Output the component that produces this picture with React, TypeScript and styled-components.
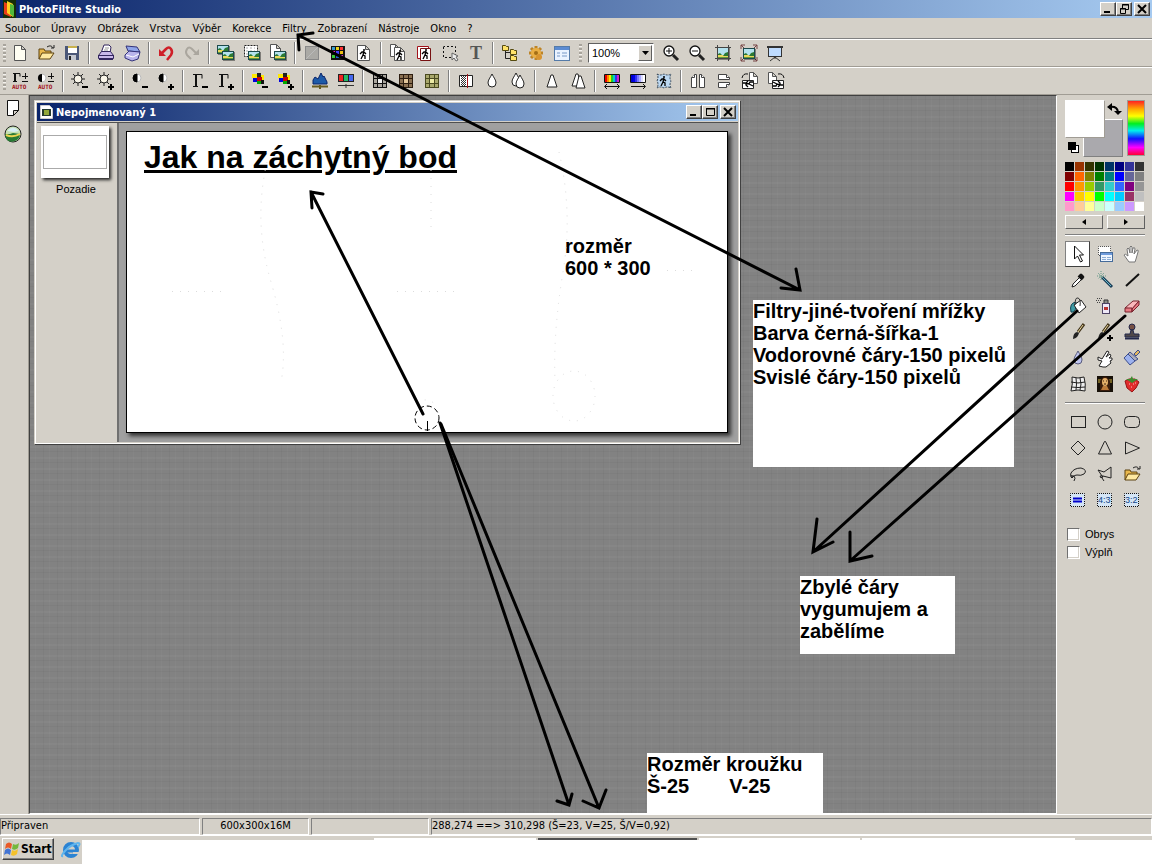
import React from "react";
import styled, { createGlobalStyle } from "styled-components";

const face = "#d4d0c8";
const uiFont = `Tahoma, "DejaVu Sans Condensed", "Noto Sans", sans-serif`;

const Man = ({ x = 0, y = 0, turn = 0 }: { x?: number; y?: number; turn?: number }) => (
  <g transform={`translate(${x} ${y}) rotate(${turn} 4 5)`} fill="none" stroke="#000">
    <circle cx="5" cy="1" r="1" fill="#000" stroke="none" />
    <path d="M5 2L4 6L6 7L6 10M4 6L2 10M1 5L3 3H5L7 5" strokeWidth="1.3" />
  </g>
);

const Page = ({ x, y, w = 11, h = 14, fill = "#fff" }: any) => (
  <path
    d={`M${x} ${y}h${w - 4}l4 4v${h - 4}h-${w}zM${x + w - 4} ${y}v4h4`}
    fill={fill}
    stroke="#555"
  />
);

const Photo = ({ x, y, w = 12, h = 9 }: any) => (
  <g>
    <rect x={x + 1} y={y + 1} width={w} height={h} fill="#0006" />
    <rect x={x} y={y} width={w} height={h} fill="#1c4a4c" />
    <rect x={x + 1} y={y + 1} width={w - 2} height={h - 2} fill="#b4e2ee" />
    <rect x={x + 1} y={y + h - 4} width={w - 2} height="3" fill="#ead75e" />
    <path d={`M${x + 1} ${y + h - 4}v-1l2-1l2 2zM${x + w - 1} ${y + h - 3}v-4l-3 1l-2 3z`} fill="#2b7a34" />
    <path d={`M${x + 1} ${y + h - 1.5}h${w - 2}`} stroke="#5f9a3a" />
  </g>
);

const Folder = () => (
  <g>
    <path d="M3 16V6h5l1 2h6v3" fill="#e9b84c" stroke="#5d4210" />
    <path d="M3 16l3-6h12l-4 6z" fill="#ffe9a0" stroke="#5d4210" />
    <path d="M11 4c3-2 5-1 6 1M15 5h3V2" fill="none" stroke="#222" />
  </g>
);

const Contrast = () => (
  <g>
    <circle cx="7" cy="7" r="4" fill="#fff" stroke="#bbb" />
    <path d="M7 3a4 4 0 0 0 0 8z" fill="#000" stroke="#000" />
  </g>
);

const Sun = () => (
  <g stroke="#222">
    <path d="M8 1v14M1 8h14M3 3l10 10M13 3L3 13" />
    <circle cx="8" cy="8" r="4" fill="#f8f4e8" />
  </g>
);

const Cubes = () => (
  <g>
    <path d="M2 3h5v4H2z" fill="#ffe800" />
    <path d="M7 2h4v4H7z" fill="#222" />
    <path d="M3 7h4v4H3z" fill="#00d" />
    <path d="M7 6h5v4H7z" fill="#c00" />
    <path d="M11 4h3v5h-2V6h-1z" fill="#ffe800" />
    <path d="M7 10h4v3H7z" fill="#0a0" />
    <path d="M11 9h3v4h-3z" fill="#111" />
  </g>
);

const Gamma = () => (
  <path d="M3 3.500h9v4M3 15.500h5M5.500 4v11M6.500 4v11" fill="none" stroke="#111" />
);

const Minus = () => <path d="M12 16h6" stroke="#000" strokeWidth="2" />;
const Plus = () => <path d="M12 16h6M15 13v6" stroke="#000" strokeWidth="2" />;

const Grid = ({ line, fill, dark }: any) => (
  <g>
    <rect x="3" y="3" width="14" height="14" fill={dark} />
    {[4, 8, 13].map((y) =>
      [4, 8, 13].map((x) => (
        <rect
          key={`${x}-${y}`}
          x={x}
          y={y}
          width={x === 8 ? 4 : 3}
          height={y === 8 ? 4 : 3}
          fill={x === 8 && y === 8 ? fill : line}
        />
      ))
    )}
  </g>
);

const Auto = () => (
  <text x="2" y="18" fontSize="6" fontWeight="700" fill="#a3131b" fontFamily="DejaVu Sans Mono, monospace">
    AUTO
  </text>
);

const Marquee = ({ children }: any) => (
  <g>
    <path
      d="M2.500 3.500h14v13h-14z"
      fill="#d4e5f6"
      stroke="#111"
      strokeDasharray="1 1"
      strokeDashoffset=".5"
    />
    {children}
  </g>
);

const Ratio = ({ value }: { value: string }) => (
  <text x="3" y="13" fontSize="9" fill="#148" fontFamily="Liberation Sans, sans-serif">
    {value}
  </text>
);

const drop = "M10 3C8 7 6 9 6 12a4 4 0 0 0 8 0C14 9 12 7 10 3z";

const icons: Record<string, React.ReactNode> = {
  new: <Page x={4.5} y={2.5} w={11} h={15} fill="#fffef2" />,
  open: <Folder />,
  save: (
    <g>
      <path d="M3 3h14v14H4l-1-1z" fill="#4b5878" />
      <rect x="6" y="3" width="9" height="7" fill="#fff" />
      <rect x="6" y="3" width="9" height="2" fill="#c9b24f" />
      <rect x="6" y="12" width="8" height="5" fill="#c4c8d0" />
      <rect x="7" y="13" width="2" height="4" fill="#222" />
    </g>
  ),
  print: (
    <g stroke="#33265e">
      <path d="M5 10l3-8h5l2 2-1 6z" fill="#fff" />
      <path d="M2.500 12.500l3-4h9l3 4v3h-15z" fill="#c9b8ea" />
      <path d="M2 12.500h16M3 16.500h14" />
      <path d="M9 5h4M8 7h4" stroke="#999" />
    </g>
  ),
  scan: (
    <g stroke="#33337a">
      <path d="M4 3l11 1l3 5l-12-1z" fill="#8ea4e8" />
      <path d="M3 12l4-4l11 1l-2 7l-6 2l-7-3z" fill="#b9b4ec" />
      <path d="M4 12l7 2l6-3" fill="none" stroke="#fff" />
    </g>
  ),
  undo: (
    <g>
      <path d="M6 10l4-4q3-3 5 0t0 6l-4 5" fill="none" stroke="#cf1f28" strokeWidth="2.500" />
      <path d="M3 6v7h7z" fill="#cf1f28" />
    </g>
  ),
  redo: (
    <g>
      <path d="M14 10l-4-4q-3-3-5 0t0 6l4 4" fill="none" stroke="#aaa69e" strokeWidth="2" />
      <path d="M17 6v6h-6z" fill="#aaa69e" />
    </g>
  ),
  copyImg: (<g><Photo x={1} y={2} /><Photo x={6} y={8} /></g>),
  pasteImg: (
    <g>
      <path d="M2.500 2.500h13v11h-13z" fill="#fff" stroke="#222" strokeDasharray="2 1" />
      <path d="M4 5h9M4 8h9M4 11h9" stroke="#aaa" strokeDasharray="2 2" />
      <Photo x={6} y={8} />
    </g>
  ),
  pageImg: (<g><Page x={2.5} y={1.5} w={10} h={13} /><Photo x={6} y={8} /></g>),
  gray: (<g><rect x="3.500" y="3.500" width="13" height="13" fill="#aaa9a5" stroke="#888" /><path d="M4 16L16 4" stroke="#bbb" /></g>),
  colors: (
    <g>
      <rect x="3" y="3" width="14" height="14" fill="#111" />
      {["#39c", "#e9d21c", "#f33", "#e2c", "#44f", "#eb1", "#3c3", "#26c", "#d3d"].map((c, i) => (
        <rect key={i} x={4 + (i % 3) * 4} y={4 + Math.floor(i / 3) * 4} width="3" height="3" fill={c} />
      ))}
    </g>
  ),
  pageMan: (<g><Page x={3.5} y={2.5} w={12} h={15} /><Man x={5} y={6} /></g>),
  pagesMan: (<g><Page x={2.5} y={1.5} w={9} h={12} /><Page x={6.5} y={4.5} w={10} h={13} /><Man x={7} y={7} /></g>),
  album: (<g><path d="M3.500 3.500h11v12h-11z" fill="#fff" stroke="#a3131b" /><path d="M6.500 5.500h10v12h-10z" fill="#fff" stroke="#711" /><Man x={7} y={6} /></g>),
  select: (
    <g>
      <path d="M3.500 3.500h12v11h-12z" fill="none" stroke="#111" strokeDasharray="2 2" strokeDashoffset=".5" />
      <path d="M12 10l6 3-2 1 2 3-2 1-2-3-2 2z" fill="#eee" stroke="#666" />
    </g>
  ),
  text: <text x="4" y="16" fontSize="18" fontWeight="700" fill="#555" fontFamily="Liberation Serif, serif">T</text>,
  tree: (
    <g>
      <path d="M5.500 6v9.500H12M5 9.500h7" fill="none" stroke="#222" />
      {[[2.5, 2.5], [10.5, 6.5], [10.5, 12.5]].map(([x, y]) => (
        <path key={y} d={`M${x} ${y}h3l1 1h2v4h-6z`} fill="#ffe36a" stroke="#554a10" />
      ))}
    </g>
  ),
  gear: (
    <g>
      <path d="M10 3v14M3 10h14M5 5l10 10M15 5L5 15" stroke="#bd8427" strokeWidth="3" />
      <circle cx="10" cy="10" r="5" fill="#e9ae43" />
      <circle cx="10" cy="10" r="2" fill="#a36e16" />
      <circle cx="13" cy="14" r="3" fill="#d89430" />
    </g>
  ),
  dialog: (
    <g>
      <rect x="2.500" y="3.500" width="15" height="14" fill="#eaf3ff" stroke="#557ba8" />
      <rect x="3" y="4" width="14" height="3" fill="#5b8bd2" />
      <path d="M5 10h3M10 10h5M5 13h3M10 13h5" stroke="#7698c6" />
    </g>
  ),
  zoomIn: (<g><circle cx="8" cy="8" r="5" fill="#fff" stroke="#111" strokeWidth="1.300" /><path d="M8 5v6M5 8h6" stroke="#111" /><path d="M12 12l5 5" stroke="#222" strokeWidth="3" /></g>),
  zoomOut: (<g><circle cx="8" cy="8" r="5" fill="#fff" stroke="#111" strokeWidth="1.300" /><path d="M5 8h6" stroke="#111" /><path d="M12 12l5 5" stroke="#222" strokeWidth="3" /></g>),
  fit: (<g><Photo x={4} y={4} w={12} h={12} /><path d="M2 4.500h16M2 15.500h16M4.500 2v16M15.500 2v16" stroke="#444" /></g>),
  fitAll: (<g><path d="M2 6V2h4M14 2h4v4M18 14v4h-4M6 18H2v-4M2 2l16 16M18 2L2 18" fill="none" stroke="#744" /><Photo x={4} y={5} w={12} h={11} /></g>),
  screen: (<g stroke="#333"><path d="M10 14L5 18M10 14l5 4M10 13v3" /><rect x="3.500" y="4.500" width="13" height="9" fill="#bfdcff" /><path d="M2 4h16" strokeWidth="2" /></g>),

  gammaAuto: (<g><path d="M3 2.500h7v3M3 10.500h4M4.500 3v8M5.500 3v8M12 5.500h6M15.500 2v6M12 10.500h6" fill="none" stroke="#111" /><Auto /></g>),
  contrastAuto: (<g><circle cx="6" cy="7" r="4" fill="#fff" stroke="#bbb" /><path d="M6 3a4 4 0 0 0 0 8z" /><path d="M12 5.500h6M15.500 2v6M12 10.500h6" stroke="#111" /><Auto /></g>),
  sunDown: (<g><Sun /><Minus /></g>),
  sunUp: (<g><Sun /><Plus /></g>),
  contrastDown: (<g><Contrast /><Minus /></g>),
  contrastUp: (<g><Contrast /><Plus /></g>),
  gammaDown: (<g><Gamma /><Minus /></g>),
  gammaUp: (<g><Gamma /><Plus /></g>),
  satDown: (<g><Cubes /><Minus /></g>),
  satUp: (<g><Cubes /><Plus /></g>),
  histogram: (<g><path d="M3 13V9l2-3 3 2 3-6 2 4 1-1 3 6v2z" fill="#1d5aa8" stroke="#0a246a" /><path d="M2 15.500h16M10 14v4" stroke="#665a20" strokeWidth="2" /></g>),
  levels: (
    <g>
      <rect x="2" y="3" width="16" height="8" fill="#222" />
      <path d="M3 4h4v6H3z" fill="#e22" /><path d="M8 4h4v6H8z" fill="#2b6" /><path d="M13 4h4v6h-4z" fill="#46e" />
      <path d="M2 14.500h16M10 13v4" stroke="#333" />
    </g>
  ),
  gridGray: <Grid dark="#111" line="#aaa69e" fill="#eee" />,
  gridBrown: <Grid dark="#2c1d10" line="#8a7052" fill="#e2c69b" />,
  gridOlive: <Grid dark="#4a4a20" line="#a9a86c" fill="#eceaa5" />,
  halftone: (
    <g>
      <path d="M3.500 4.500h13v11h-13z" fill="#fff" stroke="#222" />
      <path d="M5.500 5v10M7.500 5v10M9.500 5v10" stroke="#333" strokeDasharray="1 1" />
      <path d="M6.500 6v9M8.500 6v9" stroke="#333" strokeDasharray="1 1" />
      <path d="M11.500 3v14" stroke="#a3131b" />
    </g>
  ),
  drop: <path d={drop} fill="#fff" stroke="#222" />,
  drops: (<g fill="#fff" stroke="#222"><path d="M8 2C6 6 4 8 4 11a4 4 0 0 0 8 0C12 8 10 6 8 2z" /><path d="M12 4c-2 4-4 6-4 9a4 4 0 0 0 8 0c0-3-2-5-4-9z" /></g>),
  cone: <path d="M9 4h2l4 12H5z" fill="#fff" stroke="#222" />,
  cones: (<g fill="#fff" stroke="#222"><path d="M8 3h2l3 12H4z" /><path d="M11 5h2l4 12H8z" /></g>),
  hue: (
    <g>
      {["#e00", "#f80", "#fe0", "#2c2", "#0cc", "#33e", "#c2c"].map((c, i) => (
        <rect key={c} x={3 + i * 2} y="4" width="2" height="8" fill={c} />
      ))}
      <path d="M2.500 3.500h15v8h-15zM3 15.500h14M5 13l-2.500 2.500l2.500 2.500M15 13l2.500 2.500l-2.500 2.500" fill="none" stroke="#111" />
    </g>
  ),
  gradient: (
    <g>
      {["#00c", "#00e", "#33e", "#77f", "#aaf", "#ddf", "#fff"].map((c, i) => (
        <rect key={c} x={3 + i * 2} y="4" width="2" height="8" fill={c} />
      ))}
      <path d="M2.500 3.500h15v8h-15zM3 15.500h14M15 13l2.500 2.500l-2.500 2.500" fill="none" stroke="#111" />
    </g>
  ),
  warp: (<g><path d="M3 3q3 2 7 0q4 2 7 0q-2 4 0 7q-2 4 0 7q-4-2-7 0q-4-2-7 0q2-4 0-7q2-4 0-7z" fill="#bcd8f2" stroke="#345" strokeDasharray="2 1" /><Man x={5} y={5} /></g>),
  flipH: (<g fill="#fff" stroke="#444"><path d="M3.500 16.500V6.500l3-3h2v13zM11.500 3.500h2l3 3v10h-5z" /><path d="M6.500 3.500v3h-3M13.500 3.500v3h3" /></g>),
  flipV: (<g fill="#fff" stroke="#444"><path d="M4.500 3.500h8l3 3v2h-11zM4.500 11.500h11v2l-3 3h-8z" /><path d="M12.500 3.500v3h3M12.500 16.500v-3h3" /></g>),
  rotL: (<g><Page x={9.5} y={1.5} w={8} h={11} /><path d="M2.500 9.500h11v8h-11z" fill="#fff" stroke="#222" /><Man x={4} y={8} turn={-90} /><path d="M2 7q1-5 6-4" fill="none" stroke="#111" /></g>),
  rotR: (<g><Page x={2.5} y={1.5} w={8} h={11} /><path d="M6.500 9.500h11v8h-11z" fill="#fff" stroke="#222" /><Man x={8} y={8} turn={90} /><path d="M12 3q5-1 6 4" fill="none" stroke="#111" /></g>),

  arrow: <path d="M6.500 2v13l3-3 3 6 2-1-3-6h4z" fill="#fff" stroke="#111" />,
  layers: (
    <g>
      <rect x="3.500" y="2.500" width="12" height="9" fill="#fff" stroke="#555" strokeDasharray="1 1" strokeDashoffset=".5" />
      <rect x="5.500" y="8.500" width="12" height="9" fill="#eef5ff" stroke="#456b9a" />
      <rect x="6" y="9" width="11" height="2" fill="#6e9bdc" />
      <path d="M7 13.500h4M12 13.500h4M7 15.500h4M12 15.500h4" stroke="#8cadd6" />
    </g>
  ),
  hand: <path d="M7 18L2 11q1-2 4 1L5 5q1-2 2 0l1 4V3q1-2 2 0v6l1-5q2-1 2 1l-1 5 3-4q2 0 1 2l-2 7-1 3z" fill="#fff" stroke="#777" />,
  picker: (<g><path d="M4 17l1-3 7-7 2 2-7 7z" fill="#fff" stroke="#222" /><path d="M11 5l4 4M12 8l3-3" stroke="#111" strokeWidth="4" /></g>),
  wand: (<g><path d="M7 7l10 10" stroke="#193e58" strokeWidth="3" /><path d="M7 7l9 9" stroke="#69b8c8" /><path d="M6 1v9M2 6h9M3 3l6 6M9 3L3 9" stroke="#698" strokeDasharray="1 1" /></g>),
  line: <path d="M4 16L17 4" stroke="#111" strokeWidth="2" />,
  bucket: (
    <g>
      <path d="M8 6Q1 7 3 16q4 1 5-5z" fill="#3e9ba4" stroke="#145" />
      <path d="M6 9l7-5 5 7-7 6z" fill="#fff" stroke="#222" />
      <path d="M7 9q0-8 3-7t2 8" fill="none" stroke="#333" />
    </g>
  ),
  spray: (<g><rect x="7.500" y="7.500" width="7" height="10" fill="#eee8f8" stroke="#4d4265" /><path d="M9 7V4h4v3" fill="#888" stroke="#333" /><path d="M9 11h4v3H9z" fill="#b33" /><path d="M2 2.500h5M1 4.500h5M2 6.500h4" stroke="#444" strokeDasharray="1 1" /></g>),
  eraser: (<g stroke="#77232d"><path d="M3 12l8-7h6l-7 8z" fill="#f9b8bb" /><path d="M3 12h7v4H3zM10 16l7-7V5l-7 8z" fill="#e87a83" /></g>),
  brush: (<g><path d="M16 2l-6 8" stroke="#43351b" strokeWidth="3" /><path d="M15 3l-5 7" stroke="#ead9a0" /><path d="M9 10q-4 1-4 7q5-1 6-6z" fill="#222" /></g>),
  brushPlus: (<g><path d="M14 2L8 10" stroke="#43351b" strokeWidth="3" /><path d="M13 3l-5 7" stroke="#ead9a0" /><path d="M7 10q-3 1-4 7q5-1 6-6z" fill="#222" /><Plus /></g>),
  stamp: (<g stroke="#23284a"><circle cx="10" cy="5" r="3" fill="#765044" /><path d="M9 8h2l1 4h5v3H3v-3h5z" fill="#504848" /><path d="M3 16.500h14" strokeWidth="2" /></g>),
  water: (<g><path d={drop} fill="#bfc5f0" stroke="#56597c" /><path d="M8 11v3" stroke="#fff" strokeWidth="2" /></g>),
  smudge: <path d="M4 18l3-5-4-1V9l4 2 5-8 2 1-3 5 4-3 1 2-2 2h3v2l-2 1 1 2-5 4H8z" fill="#fff" stroke="#222" />,
  roller: (<g stroke="#3d4e8c"><path d="M12 6l4-4 2 2-4 4z" fill="#e3b65d" /><path d="M8 4l8 7-3 2-7-7z" fill="#aab" /><path d="M6 6l7 7-5 4-6-7z" fill="#9db2ee" /></g>),
  mesh: <path d="M4 3q6 2 12 0q2 7 1 14q-7-2-14 0q2-7 1-14M3 8q7 2 14 0M3 13q7 1 14 0M8 4q1 6 0 12M12 4q2 6 0 12" fill="#eee" stroke="#222" />,
  face: (<g><rect x="2" y="2" width="16" height="16" fill="#171008" /><path d="M3 5h3v4H3zM14 5h3v4h-3z" fill="#746225" /><path d="M5 17V7q5-9 10 0v10z" fill="#3b1c0b" /><ellipse cx="10" cy="8" rx="3" ry="4" fill="#e6b06b" /><path d="M8 12h4l2 4H6z" fill="#bd793a" /><path d="M8 7h1M11 7h1M9 10h2" stroke="#421" /></g>),
  berry: (<g><path d="M3 7l4-2 6 0 4 3-3 6-4 4-5-4z" fill="#e02c2c" stroke="#971414" /><path d="M4 5l4 0 2-3 1 3 5 0-3 2-3 2-3-2z" fill="#3d8a2d" /><path d="M7 10h1M11 10h1M9 13h1M13 9h1" stroke="#fbb" /></g>),
  rect: <rect x="3.500" y="4.500" width="14" height="11" fill="none" stroke="#222" />,
  ellipse: <circle cx="10" cy="10" r="7" fill="none" stroke="#222" />,
  round: <rect x="2.500" y="4.500" width="15" height="11" rx="4" fill="none" stroke="#222" />,
  diamond: <path d="M10 3l7 7-7 7-7-7z" fill="none" stroke="#222" />,
  tri: <path d="M9.500 3.500h1l6 12.500h-13z" fill="none" stroke="#222" />,
  triRight: <path d="M3.500 4v12l14-6z" fill="none" stroke="#222" />,
  lasso: <path d="M5 13Q1 12 3 9q3-5 10-5 7 2 3 6-3 2-7 1-3 0-4 2t-2 0 3-1q2 2 0 5" fill="none" stroke="#222" />,
  poly: <path d="M7 12L3 6l6 2 7-5v11l-4-1-4-1-2 2-1-2h3l-1 2 2 3" fill="none" stroke="#222" />,
  equal: <Marquee><path d="M5 8.500h9M5 11.500h9" stroke="#00c" strokeWidth="2" /></Marquee>,
  r43: <Marquee><Ratio value="4:3" /></Marquee>,
  r32: <Marquee><Ratio value="3:2" /></Marquee>,
  sheet: <path d="M4.500 2.500h11v10l-5 5h-6zM15.500 12.500h-5v5" fill="#fff" stroke="#111" />,
  globe: (
    <g>
      <circle cx="10" cy="10" r="8" fill="#c4dfb0" stroke="#222" />
      <path d="M4 7q6-7 12 0l-5 1z" fill="#d6eef5" />
      <path d="M2 10h5l3-1 7 1q0 6-7 7.500T2 10z" fill="#287a35" />
      <path d="M3 11q7 3 14-1" stroke="#ebd452" strokeWidth="2" fill="none" />
    </g>
  ),
};

const mainTools = [
  ["new", "open", "save"],
  ["print", "scan"],
  ["undo", "redo"],
  ["copyImg", "pasteImg", "pageImg"],
  ["gray", "colors", "pageMan"],
  ["pagesMan", "album", "select", "text"],
  ["tree", "gear", "dialog"],
];
const zoomTools = ["zoomIn", "zoomOut", "fit", "fitAll", "screen"];
const filterTools = [
  ["gammaAuto", "contrastAuto"],
  ["sunDown", "sunUp"],
  ["contrastDown", "contrastUp"],
  ["gammaDown", "gammaUp"],
  ["satDown", "satUp"],
  ["histogram", "levels"],
  ["gridGray", "gridBrown", "gridOlive"],
  ["halftone", "drop", "drops"],
  ["cone", "cones"],
  ["hue", "gradient", "warp"],
  ["flipH", "flipV", "rotL", "rotR"],
];
const paintTools = [
  "arrow", "layers", "hand", "picker", "wand", "line", "bucket", "spray", "eraser",
  "brush", "brushPlus", "stamp", "water", "smudge", "roller", "mesh", "face", "berry",
];
const shapeTools = [
  "rect", "ellipse", "round", "diamond", "tri", "triRight",
  "lasso", "poly", "open", "equal", "r43", "r32",
];
const palette = [
  "#000000", "#993300", "#333300", "#003300", "#003366", "#000080", "#333399", "#333333",
  "#800000", "#ff6600", "#808000", "#008000", "#008080", "#0000ff", "#666699", "#808080",
  "#ff0000", "#ff9900", "#99cc00", "#339966", "#33cccc", "#3366ff", "#800080", "#969696",
  "#ff00ff", "#ffcc00", "#ffff00", "#00ff00", "#00ffff", "#00ccff", "#993366", "#c0c0c0",
  "#ff99cc", "#ffcc99", "#ffff99", "#ccffcc", "#ccffff", "#99ccff", "#cc99ff", "#ffffff",
];
const menu = [
  "Soubor", "Úpravy", "Obrázek", "Vrstva", "Výběr", "Korekce",
  "Filtry", "Zobrazení", "Nástroje", "Okno", "?",
];

const Icon = ({ name }: { name: string }) => (
  <Glyph viewBox="0 0 20 20" aria-hidden="true">
    {icons[name]}
  </Glyph>
);

const ToolGroups = ({ groups }: { groups: string[][] }) => (
  <>
    {groups.map((group, i) => (
      <React.Fragment key={i}>
        {i > 0 && <Divider />}
        {group.map((name) => (
          <ToolButton key={name} aria-label={name}>
            <Icon name={name} />
          </ToolButton>
        ))}
      </React.Fragment>
    ))}
  </>
);

const WindowButtons = ({ restore }: { restore?: boolean }) => (
  <Captions>
    <CaptionButton aria-label="minimize">
      <svg width="12" height="10"><path d="M2 8h6" stroke="#000" strokeWidth="2" /></svg>
    </CaptionButton>
    <CaptionButton aria-label="maximize">
      <svg width="12" height="10" fill="none" stroke="#000">
        {restore ? (
          <path d="M4.500 4V.500h6v5H8M4 1h7M2.500 4.500h5v5h-5zM2 5h6" />
        ) : (
          <path d="M2.500 1.500h8v7h-8zM2 1.500h9M2 2h9" />
        )}
      </svg>
    </CaptionButton>
    <CaptionButton aria-label="close" $apart>
      <svg width="12" height="10"><path d="M2 1l8 8M10 1L2 9" stroke="#000" strokeWidth="2" /></svg>
    </CaptionButton>
  </Captions>
);

const App: React.FC = () => {
  return (
    <Shell>
      <GlobalStyle />
      <TitleBar>
        <svg width="16" height="18">
          <rect x="3" width="13" height="18" fill="#162e08" />
          <path d="M4 2l7 3v12l-7-3z" fill="#e93d19" />
          <path d="M7 1l6 3v13l-6-4z" fill="#ffcf22" />
          <path d="M10 4l4 1v12l-4-3z" fill="#52b83a" />
        </svg>
        <TitleText>PhotoFiltre Studio</TitleText>
        <WindowButtons restore />
      </TitleBar>
      <MenuBar>
        {menu.map((item) => (
          <MenuItem key={item}>{item}</MenuItem>
        ))}
      </MenuBar>
      <Toolbar>
        <Grip />
        <ToolGroups groups={mainTools} />
        <Grip $inner />
        <ZoomBox>
          <select aria-label="Zoom" defaultValue="100%">
            <option>100%</option>
            <option>200%</option>
          </select>
          <DropArrow>
            <svg width="7" height="4"><path d="M0 0h7L3.500 4z" /></svg>
          </DropArrow>
        </ZoomBox>
        {zoomTools.map((name) => (
          <ToolButton key={name} aria-label={name}>
            <Icon name={name} />
          </ToolButton>
        ))}
      </Toolbar>
      <Toolbar>
        <Grip />
        <ToolGroups groups={filterTools} />
      </Toolbar>

      <Main>
        <LeftStrip>
          <ToolButton aria-label="page"><Icon name="sheet" /></ToolButton>
          <ToolButton aria-label="explorer"><Icon name="globe" /></ToolButton>
        </LeftStrip>
        <Workspace>
          <ImageWindow>
            <ImageTitle>
              <svg width="13" height="14">
                <path d="M.500.500h9l3 3v10H.500z" fill="#fff" stroke="#ccc" />
                <rect x="2" y="4" width="9" height="7" fill="#263b2d" />
                <rect x="4" y="5" width="5" height="5" fill="#93a83a" />
              </svg>
              <TitleText>Nepojmenovaný 1</TitleText>
              <WindowButtons />
            </ImageTitle>
            <ImageBody>
              <LayerPanel>
                <Thumb>
                  <ThumbFrame />
                </Thumb>
                <LayerName>Pozadie</LayerName>
              </LayerPanel>
              <CanvasArea>
                <Canvas>
                  <Heading>Jak na záchytný bod</Heading>
                  <SizeNote>
                    rozměr
                    <br />
                    600 * 300
                  </SizeNote>
                  <CanvasMarks viewBox="0 0 600 300" fill="none" stroke="#000">
                    <circle cx="300" cy="286" r="12" strokeDasharray="5 3" />
                    <path d="M300.500 289v10" />
                    <g stroke="#dcdcdc" strokeDasharray="1 7">
                      <path d="M45 159.500h50M270 159.500h60M140 30q-14 60 4 120t10 100M304 30v70M432 20q14 60 4 120t-8 110M540 138.500h30" />
                      <ellipse cx="447" cy="264" rx="21" ry="25" />
                      <path d="M290 270q10-5 18 2" />
                    </g>
                  </CanvasMarks>
                </Canvas>
              </CanvasArea>
            </ImageBody>
          </ImageWindow>
          <GridNote>
            Filtry-jiné-tvoření mřížky
            <br />
            Barva černá-šířka-1
            <br />
            Vodorovné čáry-150 pixelů
            <br />
            Svislé čáry-150 pixelů
          </GridNote>
          <EraseNote>
            Zbylé čáry
            <br />
            vygumujem a<br />
            zabělíme
          </EraseNote>
          <CircleNote>
            Rozměr kroužku
            <CirclePair>
              <span>Š-25</span>
              <span>V-25</span>
            </CirclePair>
          </CircleNote>
        </Workspace>
        <SidePanel>
          <ColorRow>
            <Swatches>
              <Background />
              <Foreground />
              <SwatchIcons viewBox="0 0 58 56">
                <path d="M45 7q7-1 8 5" fill="none" stroke="#000" strokeWidth="2" />
                <path d="M42 7l5-4v8zM49 11h8l-4 4z" />
                <rect x="6.500" y="45.500" width="7" height="7" fill="#fff" stroke="#000" />
                <rect x="3" y="42" width="8" height="8" />
              </SwatchIcons>
            </Swatches>
            <Hue />
          </ColorRow>
          <Palette>
            {palette.map((color) => (
              <Cell key={color} $color={color} aria-label={color} />
            ))}
          </Palette>
          <Pager>
            <PagerButton aria-label="previous">
              <svg width="4" height="6"><path d="M4 0v6L0 3z" /></svg>
            </PagerButton>
            <PagerButton aria-label="next">
              <svg width="4" height="6"><path d="M0 0v6l4-3z" /></svg>
            </PagerButton>
          </Pager>
          <Rule />
          <ToolGrid>
            {paintTools.map((name, i) => (
              <PaintButton key={name} $active={i === 0} aria-label={name}>
                <Icon name={name} />
              </PaintButton>
            ))}
          </ToolGrid>
          <Rule />
          <ToolGrid>
            {shapeTools.map((name) => (
              <PaintButton key={name} aria-label={name}>
                <Icon name={name} />
              </PaintButton>
            ))}
          </ToolGrid>
          <Options>
            <Check>
              <input type="checkbox" />
              Obrys
            </Check>
            <Check>
              <input type="checkbox" />
              Výplň
            </Check>
          </Options>
        </SidePanel>
      </Main>

      <StatusBar>
        <StatusCell $width={200}>Připraven</StatusCell>
        <StatusCell $width={107} $center>600x300x16M</StatusCell>
        <StatusCell $width={118} />
        <StatusCell>288,274 ==&gt; 310,298 (Š=23, V=25, Š/V=0,92)</StatusCell>
      </StatusBar>
      <Taskbar>
        <StartButton>
          <svg width="18" height="16">
            <path d="M3 3q3-3 6 0L8 8Q5 5 2 8z" fill="#e95a28" />
            <path d="M10 3q3 2 6-1l-1 5q-3 3-6 1z" fill="#74b83c" />
            <path d="M2 9q3-3 6 0l-1 5q-3-3-6 0z" fill="#4374d3" />
            <path d="M9 9q3 2 6-1l-1 5q-3 3-6 1z" fill="#f4c22c" />
          </svg>
          Start
        </StartButton>
        <Explorer aria-label="Internet Explorer">
          <svg width="20" height="20" fill="none">
            <circle cx="10" cy="10" r="6" stroke="#2b83d3" strokeWidth="4" />
            <path d="M6 11h10" stroke="#2b83d3" strokeWidth="3" />
            <path d="M12 13h7" stroke={face} strokeWidth="2" />
            <path d="M2 16Q-1 17 4 11T17 3q3 0 0 4" stroke="#60b5ee" strokeWidth="2" />
          </svg>
        </Explorer>
        <TaskArea>
          <TaskEdge>
            <TaskTop $width={290} />
            <TaskTop $width={162} $lit />
            <TaskTop $width={159} $pressed />
            <TaskTop $width={161} $lit />
            <TaskTop $width={213} $lit />
          </TaskEdge>
        </TaskArea>
      </Taskbar>

      <Arrows viewBox="0 0 1152 864" aria-hidden="true">
        <path d="M298 35L800 290M313 33L298 35L299 50M781 288L800 290L796 269" />
        <path d="M423 414L311 192M323 194L311 192L312 208" />
        <path d="M1077 311L813 552M817 519L813 552L833 542" />
        <path d="M1125 316L850 561M850 532L850 561L872 556" />
        <path d="M440 423L569 805M557 801L569 805L572 794" />
        <path d="M441 424L599 808M583 801L599 808L606 790" />
      </Arrows>
    </Shell>
  );
};

const GlobalStyle = createGlobalStyle`
  * {
    box-sizing: border-box;
  }
  body {
    margin: 0;
    background: ${face};
    color: #000;
    font-family: ${uiFont};
    font-size: 11px;
  }
  button {
    border: 0;
    padding: 0;
    background: transparent;
    color: inherit;
    font: inherit;
  }
  svg {
    flex: none;
  }
`;

const Shell = styled.div`
  position: relative;
  display: flex;
  flex-direction: column;
  min-height: 100vh;
  overflow: hidden;
`;

const TitleBar = styled.header`
  display: flex;
  align-items: center;
  height: 18px;
  padding-right: 2px;
  color: #fff;
  background: linear-gradient(90deg, #0a246a, #a6caf0);
`;

const TitleText = styled.span`
  flex: 1;
  padding-left: 3px;
  font-weight: 700;
  white-space: nowrap;
`;

const Captions = styled.div`
  display: flex;
`;

const CaptionButton = styled.button<{ $apart?: boolean }>`
  display: flex;
  align-items: center;
  justify-content: center;
  width: 16px;
  height: 14px;
  margin-left: ${(p) => (p.$apart ? "2px" : "0")};
  background: ${face};
  border: 1px solid;
  border-color: #fff #404040 #404040 #fff;
  box-shadow: inset -1px -1px #808080;
`;

const MenuBar = styled.nav`
  display: flex;
  height: 21px;
  padding-left: 5px;
  gap: 11px;
  border-bottom: 1px solid #808080;
`;

const MenuItem = styled.button`
  white-space: nowrap;
`;

const Toolbar = styled.div`
  display: flex;
  align-items: center;
  height: 28px;
  padding-bottom: 1px;
  border-top: 1px solid #fff;
  border-bottom: 1px solid #a09c94;
`;

const Grip = styled.div<{ $inner?: boolean }>`
  width: 3px;
  height: 18px;
  margin: ${(p) => (p.$inner ? "0 6px 0 4px" : "0 1px 0 3px")};
  background: repeating-linear-gradient(#a8a49c 0 2px, #f4f2ee 2px 3px, ${face} 3px 4px);
`;

const Divider = styled.div`
  width: 2px;
  height: 22px;
  margin: 0 3px;
  border-left: 1px solid #808080;
  border-right: 1px solid #fff;
`;

const ToolButton = styled.button`
  display: flex;
  align-items: center;
  justify-content: center;
  width: 26px;
  height: 26px;
`;

const Glyph = styled.svg`
  display: block;
  width: 20px;
  height: 20px;
`;

const ZoomBox = styled.div`
  display: flex;
  width: 66px;
  height: 20px;
  margin-right: 4px;
  padding: 1px;
  background: #fff;
  border: 1px solid;
  border-color: #606060 #fff #fff #606060;

  select {
    flex: 1;
    min-width: 0;
    padding: 0 2px;
    appearance: none;
    border: 0;
    background: #fff;
    font: 11px "Liberation Sans", sans-serif;
  }
`;

const DropArrow = styled.span`
  display: flex;
  align-items: center;
  justify-content: center;
  width: 14px;
  background: ${face};
  border: 1px solid;
  border-color: #fff #606060 #606060 #fff;
`;

const Main = styled.main`
  display: flex;
  flex: 1;
`;

const LeftStrip = styled.aside`
  width: 29px;
  border-right: 1px solid #a09c94;
`;

const Workspace = styled.section`
  position: relative;
  flex: 1;
  padding: 4px;
  background:
    repeating-linear-gradient(90deg, #0000 0 5px, #ffffff06 5px 6px, #0000 6px 13px, #00000008 13px 14px),
    repeating-linear-gradient(#0000 0 3px, #00000008 3px 4px, #0000 4px 9px, #ffffff08 9px 11px),
    #828282;
  border: 1px solid;
  border-color: #404040 #fff #fff #404040;
`;

const ImageWindow = styled.article`
  width: 707px;
  padding: 2px;
  background: ${face};
  border: 1px solid;
  border-color: ${face} #404040 #404040 ${face};
  box-shadow: inset 1px 1px #fff, inset -1px -1px #fff;
`;

const ImageTitle = styled.div`
  display: flex;
  align-items: center;
  height: 18px;
  padding: 0 2px 0 3px;
  color: #fff;
  background: linear-gradient(90deg, #0a246a, #a6caf0);
`;

const ImageBody = styled.div`
  display: flex;
  margin-top: 1px;
  border-top: 1px solid #505050;
`;

const LayerPanel = styled.div`
  width: 82px;
  padding: 3px 4px;
  border-right: 2px solid #707070;
  text-align: center;
`;

const Thumb = styled.div`
  width: 68px;
  height: 52px;
  padding-top: 9px;
  background: #fff;
  box-shadow: 2px 2px 3px #222;
`;

const ThumbFrame = styled.div`
  height: 34px;
  margin: 0 2px;
  border: 1px solid #aaa;
`;

const LayerName = styled.div`
  width: 70px;
  margin-top: 4px;
  line-height: 14px;
  font-family: "Liberation Sans", sans-serif;
`;

const CanvasArea = styled.div`
  flex: 1;
  padding: 8px 7px 9px;
  background: #a0a0a0;
`;

const Canvas = styled.div`
  position: relative;
  width: 602px;
  height: 302px;
  padding: 5px 17px;
  background: #fff;
  border: 1px solid #000;
  box-shadow: 3px 3px 4px #333;
  font-family: "Liberation Sans", Arial, sans-serif;
`;

const Heading = styled.h1`
  margin: 0;
  font-size: 32px;
  line-height: 40px;
  text-decoration: underline;
  text-decoration-thickness: 3px;
`;

const SizeNote = styled.p`
  margin: 58px 0 0 421px;
  font-size: 20px;
  font-weight: 700;
  line-height: 22px;
`;

const CanvasMarks = styled.svg`
  position: absolute;
  inset: 0;
  width: 600px;
  height: 300px;
`;

const Note = styled.div`
  position: absolute;
  background: #fff;
  font: 700 20px/22px "Liberation Sans", Arial, sans-serif;
  white-space: nowrap;
`;

const GridNote = styled(Note)`
  left: 723px;
  top: 204px;
  width: 261px;
  height: 167px;
`;

const EraseNote = styled(Note)`
  left: 770px;
  top: 480px;
  width: 155px;
  height: 78px;
`;

const CircleNote = styled(Note)`
  left: 617px;
  top: 657px;
  width: 176px;
  height: 61px;
`;

const CirclePair = styled.div`
  display: flex;
  gap: 40px;
`;

const SidePanel = styled.aside`
  width: 95px;
  padding: 5px 7px 0 7px;
  border-left: 1px solid ${face};
`;

const ColorRow = styled.div`
  display: flex;
  justify-content: space-between;
  margin-bottom: 5px;
`;

const Swatches = styled.div`
  position: relative;
  width: 58px;
  height: 57px;
`;

const Foreground = styled.div`
  position: absolute;
  left: 0;
  top: 0;
  width: 40px;
  height: 38px;
  background: #fff;
  border: 1px solid;
  border-color: #fff #a09c94 #a09c94 #fff;
`;

const Background = styled.div`
  position: absolute;
  right: 0;
  bottom: 0;
  width: 40px;
  height: 38px;
  background: #aaa9ad;
  border: 1px solid;
  border-color: #fff #808080 #808080 #fff;
`;

const SwatchIcons = styled.svg`
  position: absolute;
  left: 0;
  top: 0;
  width: 58px;
  height: 56px;
`;

const Hue = styled.div`
  width: 18px;
  height: 56px;
  background: linear-gradient(#f22, #fa0 15%, #ff0 28%, #0e2 42%, #0ee 55%, #11f 70%, #f0f 86%, #f03);
  border: 1px solid #a09c94;
`;

const Palette = styled.div`
  display: grid;
  grid-template-columns: repeat(8, 10px);
  grid-auto-rows: 10px;
  margin-bottom: 3px;
`;

const Cell = styled.button<{ $color: string }>`
  background: ${(p) => p.$color};
  border-right: 1px solid ${face};
  border-bottom: 1px solid ${face};
`;

const Pager = styled.div`
  display: flex;
  gap: 4px;
`;

const PagerButton = styled.button`
  display: flex;
  flex: 1;
  align-items: center;
  justify-content: center;
  height: 14px;
  border: 1px solid;
  border-color: #fff #606060 #606060 #fff;
`;

const Rule = styled.hr`
  margin: 5px 0;
  border: 0;
  border-top: 1px solid #808080;
  border-bottom: 1px solid #fff;
`;

const ToolGrid = styled.div`
  display: grid;
  grid-template-columns: repeat(3, 27px);
  grid-auto-rows: 26px;
`;

const PaintButton = styled.button<{ $active?: boolean }>`
  display: flex;
  align-items: center;
  justify-content: center;
  margin-right: 2px;
  background: ${(p) => (p.$active ? "#fff" : "transparent")};
  border: 1px solid;
  border-color: ${(p) => (p.$active ? "#808080 #404040 #404040 #808080" : "transparent")};
`;

const Options = styled.div`
  padding: 12px 2px;
`;

const Check = styled.label`
  display: flex;
  align-items: center;
  gap: 5px;
  height: 18px;
  font: 11px "Liberation Sans", sans-serif;

  input {
    appearance: none;
    width: 13px;
    height: 13px;
    margin: 0;
    background: #fff;
    border: 1px solid;
    border-color: #707070 #fff #fff #707070;
    box-shadow: inset -1px -1px ${face};
  }
`;

const StatusBar = styled.footer`
  display: flex;
  gap: 2px;
  height: 22px;
  padding-top: 3px;
  border-top: 1px solid #fff;
  border-bottom: 1px solid #fff;
`;

const StatusCell = styled.div<{ $width?: number; $center?: boolean }>`
  flex: ${(p) => (p.$width ? `0 0 ${p.$width}px` : "1")};
  line-height: 14px;
  text-align: ${(p) => (p.$center ? "center" : "left")};
  white-space: nowrap;
  border: 1px solid;
  border-color: #808080 #fff #fff #808080;
`;

const Taskbar = styled.div`
  display: flex;
  height: 28px;
  padding-left: 2px;
`;

const StartButton = styled.button`
  display: flex;
  align-items: center;
  width: 52px;
  height: 22px;
  margin-top: 2px;
  border: 1px solid;
  border-color: #fff #404040 #404040 #fff;
  box-shadow: inset -1px -1px #808080;
  font-size: 12px;
  font-weight: 700;
`;

const Explorer = styled.button`
  width: 28px;
  padding: 3px 0 0 6px;
`;

const TaskArea = styled.div`
  flex: 1;
  margin-top: 2px;
  background: #fff;
`;

const TaskEdge = styled.div`
  display: flex;
  gap: 2px;
  height: 2px;
  background: ${face};
`;

const TaskTop = styled.div<{ $width: number; $lit?: boolean; $pressed?: boolean }>`
  width: ${(p) => p.$width}px;
  background: ${(p) => (p.$pressed ? "#505050" : p.$lit ? "#fff" : face)};
`;

const Arrows = styled.svg`
  position: absolute;
  left: 0;
  top: 0;
  width: 1152px;
  height: 864px;
  fill: none;
  stroke: #000;
  stroke-width: 3px;
  stroke-linecap: round;
  pointer-events: none;
`;

export default App;
